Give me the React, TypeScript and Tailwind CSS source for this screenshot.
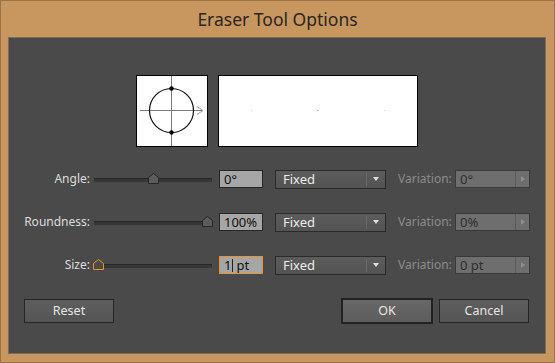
import React from "react";

const font = { fontFamily: '"Noto Sans", "Liberation Sans", sans-serif' };

function Thumb({ left, active }: { left: number; active?: boolean }) {
  return (
    <svg
      className="absolute"
      style={{ left: left - 5, top: 3 }}
      width="11"
      height="11"
      viewBox="0 0 11 11"
    >
      <path
        d="M0.5 10.5 L0.5 4.5 L5.5 0.5 L10.5 4.5 L10.5 10.5 Z"
        fill={active ? "#4a4a4a" : "#5c5c5c"}
        stroke={active ? "#f0922b" : "#262626"}
        strokeWidth="1"
      />
    </svg>
  );
}

function Row({
  label,
  thumb,
  value,
  varValue,
  active,
}: {
  label: string;
  thumb: number;
  value: React.ReactNode;
  varValue: string;
  active?: boolean;
}) {
  return (
    <div className="flex h-[18px] items-center text-[12px]">
      <div className="w-[81px] text-right text-[#dcdcdc] whitespace-nowrap leading-none">{label}</div>
      <div className="relative ml-[4px] h-[18px] w-[118px]">
        <div className="absolute left-0 right-0 top-[8px] h-[4px] border-t border-[#262626] bg-[#363636]" />
        <Thumb left={thumb} active={active} />
      </div>
      <div
        className={`ml-[7px] flex h-[18px] w-[44px] items-center pl-[4px] text-[13px] leading-none text-[#111] bg-[#a6a6a6] border ${
          active ? "border-[#f0922b]" : "border-[#262626]"
        }`}
      >
        {value}
      </div>
      <div className="ml-[12px] flex h-[19px] w-[111px] items-center border border-[#2a2a2a] bg-gradient-to-b from-[#5c5c5c] to-[#535353]">
        <span className="ml-[7px] flex-1 text-[13px] leading-none text-[#ececec]">Fixed</span>
        <div className="h-[13px] w-[1px] bg-[#3a3a3a] border-r border-[#6a6a6a]" />
        <svg width="18" height="8" viewBox="0 0 18 8">
          <path d="M6 2 L12 2 L9 6 Z" fill="#e0e0e0" />
        </svg>
      </div>
      <div className="ml-[12px] w-[53px] text-right text-[12px] text-[#8a8a8a] whitespace-nowrap leading-none">
        Variation:
      </div>
      <div className="ml-[4px] flex h-[18px] w-[75px] items-center border border-[#3a3a3a] bg-[#6e6e6e]">
        <span className="ml-[4px] flex-1 text-[13px] leading-none text-[#2e2e2e]">{varValue}</span>
        <div className="flex h-full w-[14px] items-center justify-center border-l border-[#5a5a5a]">
          <svg width="6" height="8" viewBox="0 0 6 8">
            <path d="M1 1 L5 4 L1 7 Z" fill="#8c8c8c" />
          </svg>
        </div>
      </div>
    </div>
  );
}

function Button({ label, primary, w }: { label: string; primary?: boolean; w: number }) {
  return (
    <div
      className={`flex items-center justify-center text-[12.5px] text-[#e6e6e6] bg-gradient-to-b ${
        primary
          ? "h-[26px] border-2 border-[#222] from-[#686868] to-[#5d5d5d]"
          : "h-[24px] border border-[#262626] from-[#5e5e5e] to-[#545454]"
      }`}
      style={{ width: w }}
    >
      {label}
    </div>
  );
}

export default function App() {
  return (
    <div
      className="flex h-[363px] w-[555px] flex-col border border-[#9c7449] bg-[#c8965f]"
      style={font}
    >
      <div className="flex h-[36px] items-center justify-center text-[17.5px] text-[#2a2622]">
        Eraser Tool Options
      </div>
      <div className="ml-[7px] flex h-[317px] w-[538px] flex-col border border-[#7d6c58] bg-[#4a4a4a]">
        <div className="mt-[37px] flex justify-center gap-[10px]">
          <div className="h-[72px] w-[72px] border border-black bg-white">
            <svg width="70" height="70" viewBox="0 0 70 70">
              <line x1="34.5" y1="0" x2="34.5" y2="70" stroke="#7a7a7a" strokeWidth="1" />
              <line x1="3" y1="34.5" x2="65" y2="34.5" stroke="#7a7a7a" strokeWidth="1" />
              <path d="M60 30.5 L66 34.5 L60 38.5" fill="none" stroke="#9a9a9a" strokeWidth="1" />
              <circle cx="34.5" cy="34.5" r="22" fill="none" stroke="#111" strokeWidth="1.2" />
              <circle cx="34.5" cy="12.5" r="2.2" fill="#000" />
              <circle cx="34.5" cy="56.5" r="2.2" fill="#000" />
            </svg>
          </div>
          <div className="h-[72px] w-[200px] border border-black bg-white">
            <svg width="198" height="70" viewBox="0 0 198 70">
              <rect x="32" y="34" width="1" height="1" fill="#d0d0d0" />
              <rect x="98" y="34" width="2" height="1" fill="#c0c0c0" />
              <rect x="165" y="34" width="1" height="1" fill="#d0d0d0" />
            </svg>
          </div>
        </div>
        <div className="mt-[23px] flex flex-col gap-[25px]">
          <Row label="Angle:" thumb={59} value="0°" varValue="0°" />
          <Row label="Roundness:" thumb={113} value="100%" varValue="0%" />
          <Row
            label="Size:"
            thumb={4}
            active
            value={
              <span className="flex items-center">
                1<span className="mx-[1px] inline-block h-[13px] w-[1px] bg-[#222]" />
                <span className="ml-[2px]">pt</span>
              </span>
            }
            varValue="0 pt"
          />
        </div>
        <div className="mt-[24px] flex h-[26px] items-center">
          <div className="ml-[15px]">
            <Button label="Reset" w={90} />
          </div>
          <div className="ml-[227px]">
            <Button label="OK" primary w={92} />
          </div>
          <div className="ml-[6px]">
            <Button label="Cancel" w={90} />
          </div>
        </div>
      </div>
    </div>
  );
}
